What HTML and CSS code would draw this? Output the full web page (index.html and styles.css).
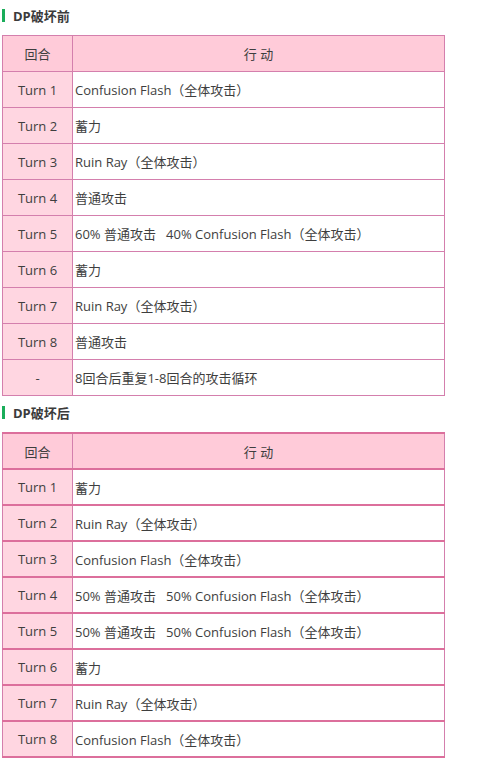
FILE: index.html
```html
<!DOCTYPE html>
<html lang="zh-CN">
<head>
    <meta charset="UTF-8">
    <meta name="viewport" content="width=device-width, initial-scale=1.0">
    <title>DP破坏前 / 后</title>
    <link rel="stylesheet" href="styles.css">
</head>
<body>
    <div class="page">
        <h3 class="section-title"><span class="bar"></span>DP破坏前</h3>
        <table class="turns">
            <tr class="head"><th>回合</th><th>行 动</th></tr>
            <tr><td>Turn 1</td><td>Confusion Flash（全体攻击）</td></tr>
            <tr><td>Turn 2</td><td>蓄力</td></tr>
            <tr><td>Turn 3</td><td>Ruin Ray（全体攻击）</td></tr>
            <tr><td>Turn 4</td><td>普通攻击</td></tr>
            <tr><td>Turn 5</td><td>60% 普通攻击&nbsp;&nbsp;&nbsp;40% Confusion Flash（全体攻击）</td></tr>
            <tr><td>Turn 6</td><td>蓄力</td></tr>
            <tr><td>Turn 7</td><td>Ruin Ray（全体攻击）</td></tr>
            <tr><td>Turn 8</td><td>普通攻击</td></tr>
            <tr><td>-</td><td>8回合后重复1-8回合的攻击循环</td></tr>
        </table>

        <h3 class="section-title second"><span class="bar"></span>DP破坏后</h3>
        <table class="turns thick">
            <tr class="head"><th>回合</th><th>行 动</th></tr>
            <tr><td>Turn 1</td><td>蓄力</td></tr>
            <tr><td>Turn 2</td><td>Ruin Ray（全体攻击）</td></tr>
            <tr><td>Turn 3</td><td>Confusion Flash（全体攻击）</td></tr>
            <tr><td>Turn 4</td><td>50% 普通攻击&nbsp;&nbsp;&nbsp;50% Confusion Flash（全体攻击）</td></tr>
            <tr><td>Turn 5</td><td>50% 普通攻击&nbsp;&nbsp;&nbsp;50% Confusion Flash（全体攻击）</td></tr>
            <tr><td>Turn 6</td><td>蓄力</td></tr>
            <tr><td>Turn 7</td><td>Ruin Ray（全体攻击）</td></tr>
            <tr><td>Turn 8</td><td>Confusion Flash（全体攻击）</td></tr>
        </table>
    </div>
</body>
</html>
```

FILE: styles.css
```css
body {
    margin: 0;
    padding: 0;
    background-color: #ffffff;
    font-family: "Open Sans", "Noto Sans CJK SC", sans-serif;
    color: #3e3e3e;
}
.page {
    padding: 9px 0 20px 2px;
}
.section-title {
    display: flex;
    align-items: center;
    gap: 8px;
    margin: 0 0 13px 0;
    height: 13px;
    font-size: 13px;
    font-weight: bold;
    color: #3b3b3b;
}
.section-title.second {
    margin-top: 10px;
    margin-bottom: 13px;
}
.bar {
    width: 3px;
    height: 13px;
    background-color: #1aad5a;
}
.turns {
    border-collapse: collapse;
    width: 443px;
    font-size: 13px;
}
.turns th,
.turns td {
    border: 1px solid #d47fad;
    height: 36px;
    padding: 0 2px;
    font-weight: normal;
    text-align: left;
    box-sizing: border-box;
}
.turns th {
    background-color: #ffcbd9;
    text-align: center;
}
.turns td:first-child {
    width: 70px;
    background-color: #ffd6e1;
    text-align: center;
}
.turns.thick th,
.turns.thick td {
    border-top: 2px solid #dc6f9c;
    border-bottom: 2px solid #dc6f9c;
    height: 36px;
}
```
